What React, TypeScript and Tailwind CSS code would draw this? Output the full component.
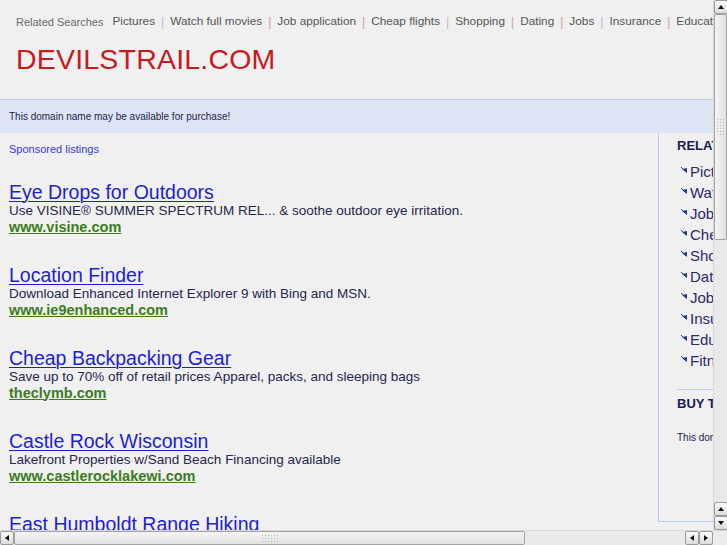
import React from "react";

const related = [
  "Pictures",
  "Watch full movies",
  "Job application",
  "Cheap flights",
  "Shopping",
  "Dating",
  "Jobs",
  "Insurance",
  "Education",
  "Fitness",
];

const listings = [
  {
    title: "Eye Drops for Outdoors",
    desc: "Use VISINE® SUMMER SPECTRUM REL... & soothe outdoor eye irritation.",
    url: "www.visine.com",
  },
  {
    title: "Location Finder",
    desc: "Download Enhanced Internet Explorer 9 with Bing and MSN.",
    url: "www.ie9enhanced.com",
  },
  {
    title: "Cheap Backpacking Gear",
    desc: "Save up to 70% off of retail prices Apparel, packs, and sleeping bags",
    url: "theclymb.com",
  },
  {
    title: "Castle Rock Wisconsin",
    desc: "Lakefront Properties w/Sand Beach Financing available",
    url: "www.castlerocklakewi.com",
  },
  {
    title: "East Humboldt Range Hiking",
    desc: "Trails, maps and guides for the Ruby Mountains",
    url: "www.travelnevada.com",
  },
];

function Arrow({ dir }: { dir: "up" | "down" | "left" | "right" }) {
  const pts = {
    up: "1,6 4,2 7,6",
    down: "1,2 4,6 7,2",
    left: "6,1 2,4 6,7",
    right: "2,1 6,4 2,7",
  }[dir];
  return (
    <svg width="8" height="8" viewBox="0 0 8 8">
      <polygon points={pts} fill="#111" />
    </svg>
  );
}

function SbButton({ dir }: { dir: "up" | "down" | "left" | "right" }) {
  return (
    <div className="w-[14px] h-[14px] flex items-center justify-center rounded-[2px] border border-[#9a9a9a] bg-gradient-to-b from-[#fafafa] to-[#dcdcdc]">
      <Arrow dir={dir} />
    </div>
  );
}

function Grip({ vertical }: { vertical?: boolean }) {
  return (
    <div className={vertical ? "grid grid-cols-3 gap-[2px]" : "grid grid-cols-6 gap-[2px]"}>
      {Array.from({ length: 18 }).map((_, i) => (
        <span key={i} className="w-[1px] h-[1px] bg-[#b5b5b5]" />
      ))}
    </div>
  );
}

function SideArrow() {
  return (
    <svg width="7" height="7" viewBox="0 0 7 7" className="mr-[2px] mt-[-3px]">
      <polygon points="1,2 6,6 6,1" fill="#2b3a8a" />
      <line x1="0" y1="0" x2="5" y2="5" stroke="#2b3a8a" strokeWidth="1" />
    </svg>
  );
}

export default function App() {
  return (
    <div
      className="w-[727px] h-[545px] flex flex-col bg-[#f0f0f0] overflow-hidden"
      style={{ fontFamily: '"Liberation Sans", Arial, sans-serif' }}
    >
      <div className="flex flex-1 min-h-0">
        {/* page */}
        <div className="flex-1 overflow-hidden">
          <div className="w-[960px]">
            {/* header */}
            <div className="h-[100px] border-b border-[#b9c9e6] pl-[16px] pt-[13px]">
              <div className="flex items-center whitespace-nowrap">
                <span className="text-[11px] text-[#6a6a6a] mr-[9px]">Related Searches</span>
                {related.map((r, i) => (
                  <React.Fragment key={r}>
                    {i > 0 && (
                      <span
                        className={
                          "mx-[6px] text-[12px] " +
                          (i % 3 === 1 ? "text-[#b9b9d0]" : "text-[#d89a9a]")
                        }
                      >
                        |
                      </span>
                    )}
                    <span className="text-[11.8px] text-[#555]">{r}</span>
                  </React.Fragment>
                ))}
              </div>
              <div className="mt-[14px] text-[28.5px] leading-none text-[#c8191e] tracking-[0.2px]">
                DEVILSTRAIL.COM
              </div>
            </div>
            {/* banner */}
            <div className="h-[33px] bg-[#dde5f4] pl-[9px] flex items-center text-[10px] text-[#1d1d4d]">
              This domain name may be available for purchase!
            </div>
            <div className="flex">
              {/* listings */}
              <div className="w-[658px] pl-[9px] pt-[8px]">
                <div className="text-[11px] text-[#3838d8]">Sponsored listings</div>
                <div className="mt-[24px] flex flex-col gap-[29px]">
                  {listings.map((l) => (
                    <div key={l.title} className="flex flex-col">
                      <a className="text-[19.5px] leading-[20px] text-[#1e1ed2] underline underline-offset-[2px] decoration-1">
                        {l.title}
                      </a>
                      <div className="text-[13.5px] leading-[17px] text-[#26264e]">{l.desc}</div>
                      <a className="text-[14.5px] leading-[17px] font-bold text-[#3a7d1e] underline decoration-1">
                        {l.url}
                      </a>
                    </div>
                  ))}
                </div>
              </div>
              {/* sidebar */}
              <div className="w-[260px] h-[389px] border-l border-b border-[#b7c8ec] pl-[18px]">
                <div className="border-b border-[#b7c8ec] h-[257px] pt-[3px]">
                  <div className="text-[13px] font-bold text-[#1a1a55]">RELATED SEARCHES</div>
                  <div className="mt-[6px] flex flex-col">
                    {related.map((r) => (
                      <div key={r} className="h-[21px] flex items-center pl-[4px] text-[15px] text-[#2a2a6a]">
                        <SideArrow />
                        {r}
                      </div>
                    ))}
                  </div>
                </div>
                <div className="pt-[4px]">
                  <div className="text-[13px] font-bold text-[#1a1a55]">BUY THIS DOMAIN</div>
                  <div className="mt-[16px] text-[10px] text-[#1d1d4d]">This domain may be for sale.</div>
                </div>
              </div>
            </div>
          </div>
        </div>
        {/* vertical scrollbar */}
        <div className="w-[14px] flex flex-col bg-[#e9e9e9] border-l border-[#d8d8d8]">
          <SbButton dir="up" />
          <div className="h-[226px] rounded-[2px] border border-[#a3a3a3] bg-gradient-to-r from-[#f4f4f4] to-[#e2e2e2] flex items-center justify-center">
            <Grip vertical />
          </div>
          <div className="flex-1" />
          <SbButton dir="up" />
          <SbButton dir="down" />
        </div>
      </div>
      {/* horizontal scrollbar */}
      <div className="h-[15px] flex bg-[#e9e9e9] border-t border-[#d8d8d8]">
        <SbButton dir="left" />
        <div className="w-[511px] rounded-[2px] border border-[#a3a3a3] bg-gradient-to-b from-[#f4f4f4] to-[#e2e2e2] flex items-center justify-center">
          <Grip />
        </div>
        <div className="flex-1" />
        <SbButton dir="left" />
        <SbButton dir="right" />
        <div className="w-[14px] bg-[#ececec]" />
      </div>
    </div>
  );
}
